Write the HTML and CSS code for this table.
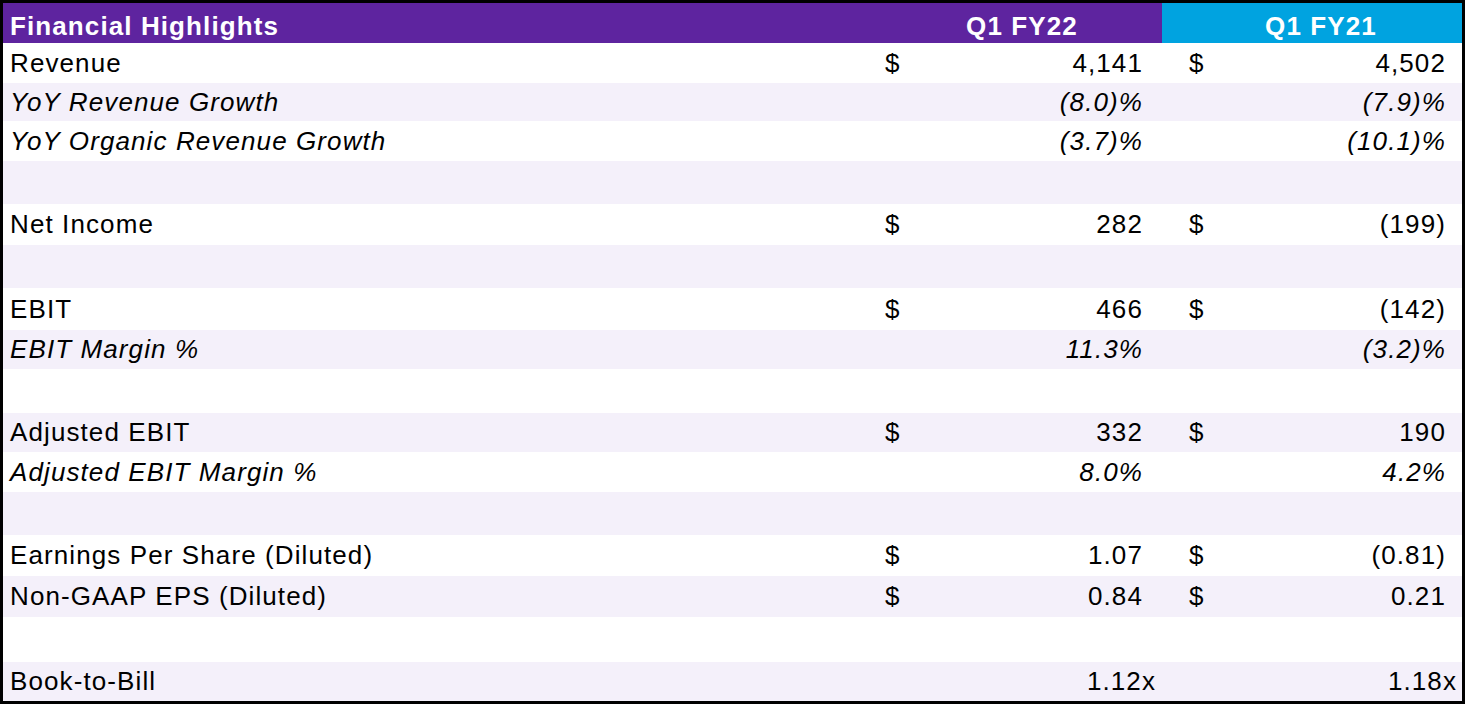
FILE: index.html
```html
<!DOCTYPE html>
<html lang="en">
<head>
<meta charset="utf-8">
<title>Financial Highlights</title>
<link rel="stylesheet" href="styles.css">
</head>
<body>
<div class="sheet">
  <div class="row head">
    <div class="label">Financial Highlights</div>
    <div class="hcell fy22">Q1 FY22</div>
    <div class="hcell fy21">Q1 FY21</div>
  </div>

  <div class="row">
    <div class="label">Revenue</div>
    <div class="val c2"><span>$</span><span>4,141</span></div>
    <div class="val c3"><span>$</span><span>4,502</span></div>
  </div>
  <div class="row alt it">
    <div class="label">YoY Revenue Growth</div>
    <div class="val c2"><span></span><span>(8.0)%</span></div>
    <div class="val c3"><span></span><span>(7.9)%</span></div>
  </div>
  <div class="row it">
    <div class="label">YoY Organic Revenue Growth</div>
    <div class="val c2"><span></span><span>(3.7)%</span></div>
    <div class="val c3"><span></span><span>(10.1)%</span></div>
  </div>
  <div class="row alt"></div>

  <div class="row">
    <div class="label">Net Income</div>
    <div class="val c2"><span>$</span><span>282</span></div>
    <div class="val c3"><span>$</span><span>(199)</span></div>
  </div>
  <div class="row alt"></div>

  <div class="row">
    <div class="label">EBIT</div>
    <div class="val c2"><span>$</span><span>466</span></div>
    <div class="val c3"><span>$</span><span>(142)</span></div>
  </div>
  <div class="row alt it">
    <div class="label">EBIT Margin %</div>
    <div class="val c2"><span></span><span>11.3%</span></div>
    <div class="val c3"><span></span><span>(3.2)%</span></div>
  </div>
  <div class="row"></div>

  <div class="row alt">
    <div class="label">Adjusted EBIT</div>
    <div class="val c2"><span>$</span><span>332</span></div>
    <div class="val c3"><span>$</span><span>190</span></div>
  </div>
  <div class="row it">
    <div class="label">Adjusted EBIT Margin %</div>
    <div class="val c2"><span></span><span>8.0%</span></div>
    <div class="val c3"><span></span><span>4.2%</span></div>
  </div>
  <div class="row alt"></div>

  <div class="row">
    <div class="label">Earnings Per Share (Diluted)</div>
    <div class="val c2"><span>$</span><span>1.07</span></div>
    <div class="val c3"><span>$</span><span>(0.81)</span></div>
  </div>
  <div class="row alt">
    <div class="label">Non-GAAP EPS (Diluted)</div>
    <div class="val c2"><span>$</span><span>0.84</span></div>
    <div class="val c3"><span>$</span><span>0.21</span></div>
  </div>
  <div class="row"></div>

  <div class="row alt">
    <div class="label">Book-to-Bill</div>
    <div class="val c2 ratio"><span></span><span>1.12x</span></div>
    <div class="val c3 ratio"><span></span><span>1.18x</span></div>
  </div>
</div>
</body>
</html>
```

FILE: styles.css
```css
html, body {
  margin: 0;
  padding: 0;
  background: #ffffff;
}

body {
  font-family: "Liberation Sans", Arial, Helvetica, sans-serif;
  font-size: 26px;
  letter-spacing: 1.1px;
  color: #000000;
}

.sheet {
  box-sizing: border-box;
  width: 1465px;
  height: 704px;
  border: 3px solid #000000;
  display: grid;
  grid-template-rows: 40px 40px 38px 40px 43px 41px 43px 42px 39px 44px 39px 40px 43px 41px 41px 45px 39px;
  background: #ffffff;
}

.row {
  display: grid;
  grid-template-columns: 873px 286px 300px;
  align-items: center;
  background: #ffffff;
}

.row.alt {
  background: #f4f0fa;
}

.row.it {
  font-style: italic;
}

.label {
  padding-left: 7px;
  white-space: nowrap;
}

.val {
  display: flex;
  justify-content: space-between;
  white-space: nowrap;
}

.val.c2 {
  padding-left: 9px;
  padding-right: 19px;
}

.val.c3 {
  padding-left: 27px;
  padding-right: 16px;
}

.val.c2.ratio {
  padding-right: 6px;
}

.val.c3.ratio {
  padding-right: 5px;
}

.row.head {
  align-items: stretch;
  color: #ffffff;
  font-weight: bold;
  background: #5e249f;
}

.row.head .label,
.row.head .hcell {
  padding-top: 8px;
}

.hcell {
  text-align: center;
}

.hcell.fy22 {
  padding-left: 6px;
}

.hcell.fy21 {
  background: #00a3e0;
  padding-left: 18px;
}
```
